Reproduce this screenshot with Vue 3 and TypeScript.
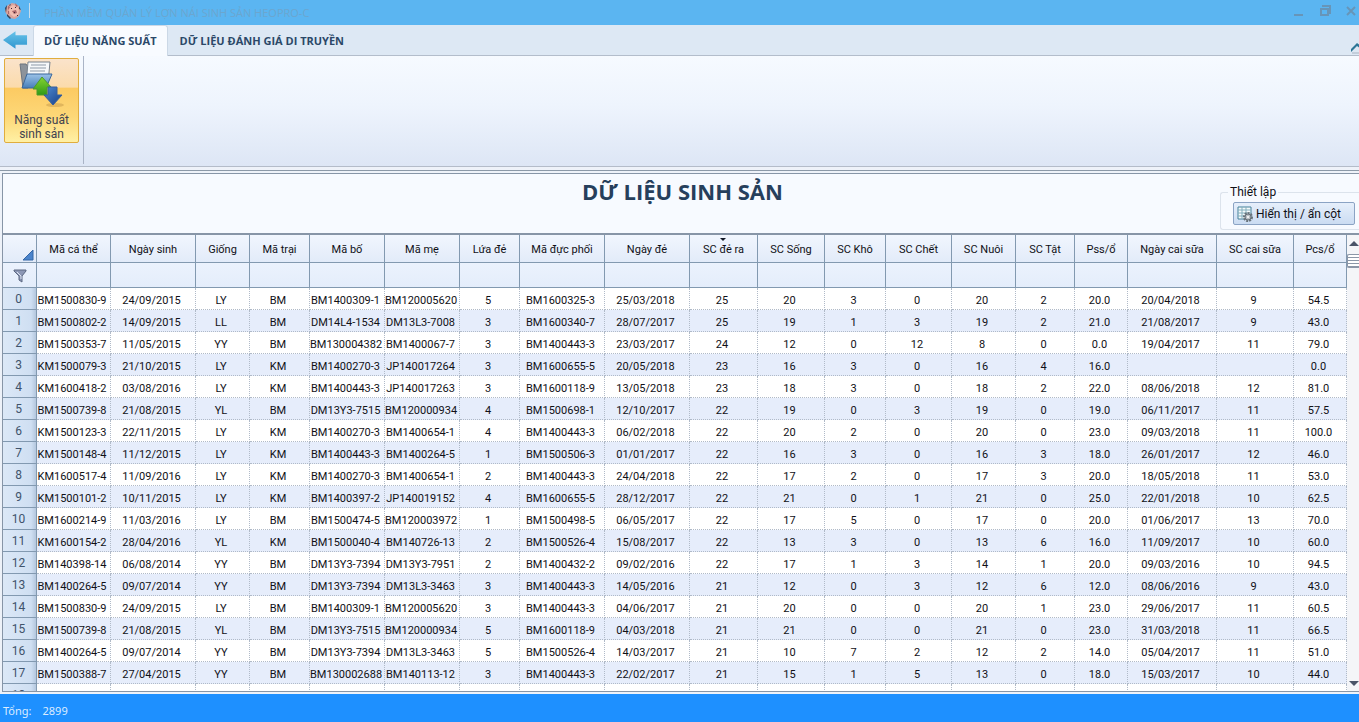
<script setup lang="ts">
interface Column { label: string; width: number }

const columns: Column[] = [
  { label: 'Mã cá thể', width: 74 },
  { label: 'Ngày sinh', width: 85 },
  { label: 'Giống', width: 54 },
  { label: 'Mã trại', width: 60 },
  { label: 'Mã bố', width: 75 },
  { label: 'Mã mẹ', width: 75 },
  { label: 'Lứa đẻ', width: 60 },
  { label: 'Mã đực phối', width: 85 },
  { label: 'Ngày đẻ', width: 85 },
  { label: 'SC đẻ ra', width: 68 },
  { label: 'SC Sống', width: 67 },
  { label: 'SC Khô', width: 61 },
  { label: 'SC Chết', width: 66 },
  { label: 'SC Nuôi', width: 64 },
  { label: 'SC Tật', width: 59 },
  { label: 'Pss/ổ', width: 53 },
  { label: 'Ngày cai sữa', width: 89 },
  { label: 'SC cai sữa', width: 77 },
  { label: 'Pcs/ổ', width: 53 },
]
const sortedLabel = 'SC đẻ ra'

const rows: string[][] = [
  'BM1500830-9,24/09/2015,LY,BM,BM1400309-1,BM120005620,5,BM1600325-3,25/03/2018,25,20,3,0,20,2,20.0,20/04/2018,9,54.5',
  'BM1500802-2,14/09/2015,LL,BM,DM14L4-1534,DM13L3-7008,3,BM1600340-7,28/07/2017,25,19,1,3,19,2,21.0,21/08/2017,9,43.0',
  'BM1500353-7,11/05/2015,YY,BM,BM130004382,BM1400067-7,3,BM1400443-3,23/03/2017,24,12,0,12,8,0,0.0,19/04/2017,11,79.0',
  'KM1500079-3,21/10/2015,LY,KM,BM1400270-3,JP140017264,3,BM1600655-5,20/05/2018,23,16,3,0,16,4,16.0,,,0.0',
  'KM1600418-2,03/08/2016,LY,KM,BM1400443-3,JP140017263,3,BM1600118-9,13/05/2018,23,18,3,0,18,2,22.0,08/06/2018,12,81.0',
  'BM1500739-8,21/08/2015,YL,BM,DM13Y3-7515,BM120000934,4,BM1500698-1,12/10/2017,22,19,0,3,19,0,19.0,06/11/2017,11,57.5',
  'KM1500123-3,22/11/2015,LY,KM,BM1400270-3,BM1400654-1,4,BM1400443-3,06/02/2018,22,20,2,0,20,0,23.0,09/03/2018,11,100.0',
  'KM1500148-4,11/12/2015,LY,KM,BM1400443-3,BM1400264-5,1,BM1500506-3,01/01/2017,22,16,3,0,16,3,18.0,26/01/2017,12,46.0',
  'KM1600517-4,11/09/2016,LY,KM,BM1400270-3,BM1400654-1,2,BM1400443-3,24/04/2018,22,17,2,0,17,3,20.0,18/05/2018,11,53.0',
  'KM1500101-2,10/11/2015,LY,KM,BM1400397-2,JP140019152,4,BM1600655-5,28/12/2017,22,21,0,1,21,0,25.0,22/01/2018,10,62.5',
  'BM1600214-9,11/03/2016,LY,BM,BM1500474-5,BM120003972,1,BM1500498-5,06/05/2017,22,17,5,0,17,0,20.0,01/06/2017,13,70.0',
  'KM1600154-2,28/04/2016,YL,KM,BM1500040-4,BM140726-13,2,BM1500526-4,15/08/2017,22,13,3,0,13,6,16.0,11/09/2017,10,60.0',
  'BM140398-14,06/08/2014,YY,BM,DM13Y3-7394,DM13Y3-7951,2,BM1400432-2,09/02/2016,22,17,1,3,14,1,20.0,09/03/2016,10,94.5',
  'BM1400264-5,09/07/2014,YY,BM,DM13Y3-7394,DM13L3-3463,3,BM1400443-3,14/05/2016,21,12,0,3,12,6,12.0,08/06/2016,9,43.0',
  'BM1500830-9,24/09/2015,LY,BM,BM1400309-1,BM120005620,3,BM1400443-3,04/06/2017,21,20,0,0,20,1,23.0,29/06/2017,11,60.5',
  'BM1500739-8,21/08/2015,YL,BM,DM13Y3-7515,BM120000934,5,BM1600118-9,04/03/2018,21,21,0,0,21,0,23.0,31/03/2018,11,66.5',
  'BM1400264-5,09/07/2014,YY,BM,DM13Y3-7394,DM13L3-3463,5,BM1500526-4,14/03/2017,21,10,7,2,12,2,14.0,05/04/2017,11,51.0',
  'BM1500388-7,27/04/2015,YY,BM,BM130002688,BM140113-12,3,BM1400443-3,22/02/2017,21,15,1,5,13,0,18.0,15/03/2017,10,44.0',
  ',,,,,,,,,,,,,,,,,,',
].map((line) => line.split(','))
</script>

<template>
  <div class="app">
    <header class="titlebar">
      <svg class="logo" viewBox="0 0 18 18" aria-hidden="true">
        <path d="M2 6 4 3l4-2 4 1 3 2 2 5-2 5-4 3-5-1-3-3-2-4z" fill="#d9a29a" />
        <path d="M6 5 9 3l4 1 2 4-1 5-4 2-4-3-1-4z" fill="#efbdb1" />
        <path d="M1 6 3 3 2 11zM3 12l4 4-1 1-3-3zM15 4l2 4-2-1zM5 3l2-1-1 2z" fill="#33435a" />
        <path d="m4 4 2 1-2 3zM11 1l3 3-2 1zM8 9l4-1 1 3-3 1zM4 9h1v3H4z" fill="#a8666a" />
        <path d="M7 6h1v1H7zM11 5h1v1h-1zM10 10h1v1h-1zM13 13h1v1h-1z" fill="#3b2632" />
      </svg>
      <span class="divider"></span>
      <span class="app-name">PHẦN MỀM QUẢN LÝ LỢN NÁI SINH SẢN HEOPRO-C</span>
      <div class="window-buttons">
        <button type="button" aria-label="Thu nhỏ">
          <svg viewBox="0 0 12 12"><path d="M1 10h9" /></svg>
        </button>
        <button type="button" aria-label="Khôi phục">
          <svg viewBox="0 0 12 12"><path d="M3 1h8v8M2 4h7v6H2z" /></svg>
        </button>
        <button type="button" aria-label="Đóng">
          <svg viewBox="0 0 12 12"><path d="m2 2 8 8M10 2l-8 8" /></svg>
        </button>
      </div>
    </header>

    <nav class="tabs">
      <button class="back" type="button" aria-label="Quay lại">
        <svg viewBox="0 0 26 20">
          <defs>
            <linearGradient id="back-fill" x1="0" y1="0" x2="0" y2="1">
              <stop offset="0" stop-color="#67c3e9" />
              <stop offset="1" stop-color="#2f96cf" />
            </linearGradient>
          </defs>
          <path d="M0 10 13 1v4h12v10H13v4z" fill="url(#back-fill)" />
        </svg>
      </button>
      <button class="tab active" type="button">DỮ LIỆU NĂNG SUẤT</button>
      <button class="tab" type="button">DỮ LIỆU ĐÁNH GIÁ DI TRUYỀN</button>
      <button class="collapse" type="button" aria-label="Thu gọn">
        <svg viewBox="0 0 8 14"><path d="M0 8 6 2l8 6v3L6 5 0 11z" fill="#2d7696" /><path d="M1 12h7" stroke="#a9b4c2" /></svg>
      </button>
    </nav>

    <section class="ribbon">
      <div class="ribbon-group">
        <button class="big-button" type="button">
          <svg viewBox="0 0 48 48" aria-hidden="true">
            <defs>
              <linearGradient id="folder" x1="0" y1="0" x2="0" y2="1">
                <stop offset="0" stop-color="#9cc3e8" />
                <stop offset="1" stop-color="#477eb9" />
              </linearGradient>
              <linearGradient id="up" x1="0" y1="0" x2="0" y2="1">
                <stop offset="0" stop-color="#86d332" />
                <stop offset="1" stop-color="#2f9a16" />
              </linearGradient>
              <linearGradient id="down" x1="0" y1="0" x2="1" y2="1">
                <stop offset="0" stop-color="#4f8ad0" />
                <stop offset="1" stop-color="#153f88" />
              </linearGradient>
            </defs>
            <ellipse cx="37" cy="46" rx="9" ry="2" fill="#c69a4a" opacity=".5" />
            <path d="M2 5h6l2 3v21H5z" fill="#8d939b" stroke="#6c7480" />
            <path d="M10 3h22l-2 21-22 2z" fill="#f6f8fa" stroke="#79828d" />
            <path d="M13 6h15M12 9h16M12 12h15" stroke="#8d99a7" />
            <path d="M9 15h25l-6 14H4z" fill="url(#folder)" stroke="#3b679b" />
            <path d="m24 18 9 10h-4v8H19v-6h-4z" fill="url(#up)" stroke="#4c9b2a" />
            <path d="M30 28h9v8h5L35 46l-9-10h4z" fill="url(#down)" stroke="#365f9e" />
          </svg>
          <span>Năng suất<br />sinh sản</span>
        </button>
      </div>
    </section>

    <main class="panel">
      <div class="panel-head">
        <h1>DỮ LIỆU SINH SẢN</h1>
        <fieldset class="settings">
          <legend>Thiết lập</legend>
          <button type="button">
            <svg viewBox="0 0 16 16" aria-hidden="true">
              <path d="M1 1h13v12H1z" fill="#f4fafb" stroke="#44809a" />
              <path d="M1 4h13M1 7h13M1 10h13M5 1v12M9 1v12" stroke="#83afbd" />
              <circle cx="11" cy="11" r="4" fill="none" stroke="#68727a" stroke-width="2" stroke-dasharray="2 1" />
              <circle cx="11" cy="11" r="3" fill="#b9c0c5" stroke="#68727a" />
              <circle cx="11" cy="11" r="1" fill="#fff" />
            </svg>
            Hiển thị / ẩn cột
          </button>
        </fieldset>
      </div>

      <div class="grid">
        <div class="grid-view">
          <table>
            <colgroup>
              <col class="index-col" />
              <col v-for="c in columns" :key="c.label" :style="{ width: c.width + 'px' }" />
            </colgroup>
            <thead>
              <tr class="labels">
                <th class="corner" aria-label="Chọn tất cả">
                  <svg viewBox="0 0 12 12"><path d="M11 1v10H1z" fill="#4b84cc" stroke="#3566a5" /></svg>
                </th>
                <th v-for="c in columns" :key="c.label" scope="col" :class="{ sorted: c.label === sortedLabel }">{{ c.label }}</th>
              </tr>
              <tr class="filters">
                <th aria-label="Lọc">
                  <svg viewBox="0 0 14 14">
                    <path d="M1 1h12v1L9 7v6l-3-2V7L1 2z" fill="#8c97b5" stroke="#5c6882" />
                    <path d="m4 3 4 4v3" fill="none" stroke="#dfe5f2" />
                  </svg>
                </th>
                <td v-for="c in columns" :key="c.label"></td>
              </tr>
            </thead>
            <tbody>
              <tr v-for="(row, i) in rows" :key="i">
                <th scope="row">{{ i }}</th>
                <td v-for="(cell, j) in row" :key="j">{{ cell }}</td>
              </tr>
            </tbody>
          </table>
        </div>
        <div class="scrollbar">
          <button class="up" type="button" aria-label="Cuộn lên"></button>
          <span class="thumb"></span>
          <button class="down" type="button" aria-label="Cuộn xuống"></button>
        </div>
      </div>
    </main>

    <footer class="status"><span>Tổng:</span><span>2899</span></footer>
  </div>
</template>

<style>
body {
  overflow: hidden;
}
</style>

<style scoped>
* {
  box-sizing: border-box;
}

.app {
  display: flex;
  flex-direction: column;
  height: 100vh;
  overflow: hidden;
  background: #eef2f9;
  color: #101016;
  font-family: Roboto, "Noto Sans", sans-serif;
  font-size: 11px;
}

button {
  margin: 0;
  padding: 0;
  border: 0;
  background: none;
  color: inherit;
  font: inherit;
}

svg {
  display: block;
  flex: none;
}

.titlebar {
  display: flex;
  flex: none;
  align-items: center;
  height: 25px;
  padding: 0 2px 4px 4px;
  background: #5bb5f1;
}

.logo {
  width: 18px;
  height: 18px;
}

.divider {
  width: 1px;
  height: 15px;
  margin: 0 14px 0 7px;
  background: #c5dced;
}

.app-name {
  padding-top: 5px;
  color: #6ba6cf;
  font-family: "Open Sans", "Noto Sans", sans-serif;
  font-size: 11px;
  line-height: 16px;
}

.window-buttons {
  display: flex;
  gap: 14px;
  margin-left: auto;
}

.window-buttons svg {
  width: 12px;
  height: 12px;
  fill: none;
  stroke: #6795b8;
  stroke-width: 2;
}

.tabs {
  display: flex;
  flex: none;
  height: 31px;
  border-bottom: 1px solid #b3bdcb;
  background: #dde8f4;
}

.back {
  width: 33px;
  padding: 0 0 1px 3px;
}

.back svg {
  width: 25px;
  height: 20px;
}

.tab {
  height: 31px;
  padding: 0 12px;
  color: #2b4868;
  font-family: "Open Sans", "Noto Sans", sans-serif;
  font-size: 11px;
  font-weight: 700;
}

.tab.active {
  padding: 0 10px 1px;
  border: 1px solid #cbd8e6;
  border-bottom: 0;
  border-radius: 3px 3px 0 0;
  background: #f8fbff;
}

.collapse {
  align-self: flex-end;
  margin-left: auto;
}

.collapse svg {
  width: 8px;
  height: 14px;
}

.ribbon {
  flex: none;
  height: 111px;
  border-bottom: 1px solid #b4bcc9;
  background: linear-gradient(#f6faff, #eef4fd 45%, #dde6f5);
}

.ribbon-group {
  width: 84px;
  height: 108px;
  padding: 2px 4px;
  border-right: 1px solid #aab4c6;
}

.big-button {
  display: flex;
  flex-direction: column;
  align-items: center;
  gap: 6px;
  width: 75px;
  height: 85px;
  border: 1px solid #e0ad3e;
  border-radius: 2px;
  background: linear-gradient(#fae3cb, #fbdbab 34%, #fcca62 35%, #fdd878 70%, #fff0a4);
  color: #3e4250;
  font-size: 12px;
  line-height: 14px;
}

.big-button svg {
  width: 48px;
  height: 48px;
}

.panel {
  display: flex;
  flex: 1;
  flex-direction: column;
  min-height: 0;
  margin-top: 3px;
  padding: 2px 0 0 2px;
  border-top: 1px solid #8c99a8;
}

.panel-head {
  display: flex;
  flex: none;
  align-items: flex-start;
  height: 62px;
  border: solid #8795a7;
  border-width: 1px 0 2px 1px;
  background: #f7faff;
}

h1 {
  flex: 1;
  margin: 0;
  padding: 2px 0 0 142px;
  color: #263f5c;
  font-family: "Open Sans", "Noto Sans", sans-serif;
  font-size: 22px;
  font-weight: 700;
  line-height: 30px;
  text-align: center;
}

.settings {
  width: 139px;
  min-width: 0;
  height: 46px;
  margin: 10px 0 0;
  padding: 0 0 0 12px;
  border: 1px solid #dce3ec;
  border-right: 0;
  border-radius: 3px 0 0 3px;
  font-size: 12px;
}

.settings legend {
  margin-left: -5px;
  padding: 0 2px;
  line-height: 16px;
}

.settings button {
  display: flex;
  align-items: center;
  gap: 3px;
  width: 122px;
  height: 23px;
  margin-top: 2px;
  padding-left: 3px;
  border: 1px solid #8ba3c4;
  border-radius: 2px;
  background: linear-gradient(#e6effb, #cbdcf2);
  white-space: nowrap;
}

.settings svg {
  width: 16px;
  height: 16px;
}

.grid {
  display: flex;
  flex: 1;
  min-height: 0;
  border: solid #8795a7;
  border-width: 0 0 1px 1px;
}

.grid-view {
  flex: 1;
  min-width: 0;
  overflow: hidden;
  background: #fff;
}

table {
  width: 100%;
  border-spacing: 0;
  border-collapse: separate;
  table-layout: fixed;
}

.index-col {
  width: 34px;
}

th,
td {
  height: 22px;
  padding: 2px 0 0;
  border: 0 solid #8299b0;
  border-width: 0 1px 1px 0;
  font-weight: 400;
  line-height: 14px;
  text-align: center;
  white-space: nowrap;
}

.labels th {
  height: 28px;
  background: linear-gradient(#f1f6fe, #e2ebf9);
}

.filters th,
.filters td {
  height: 25px;
  background: linear-gradient(#ebf2fd, #e4edfb);
}

.corner svg {
  width: 12px;
  height: 12px;
  margin: 10px 2px 0 auto;
}

.filters svg {
  width: 14px;
  height: 14px;
  margin: 0 auto;
}

.sorted {
  position: relative;
}

.sorted::before {
  position: absolute;
  top: 3px;
  left: 50%;
  margin-left: -4px;
  border: 3px solid transparent;
  border-top-color: #111827;
  border-bottom: 0;
  content: "";
}

tbody th {
  padding: 0 2px 0 0;
  background: linear-gradient(90deg, #dce8f7, #cfdff2 85%, #b4c7de);
  color: #40536b;
  font-size: 12px;
}

tbody td {
  padding: 4px 3px 0 0;
  border-style: dotted;
  border-color: #b0bac8;
}

tbody tr:nth-child(even) td {
  background: #e6edfb;
}

.scrollbar {
  display: flex;
  flex: none;
  flex-direction: column;
  align-items: flex-end;
  width: 12px;
  padding: 6px 0 5px;
  background: #f4f5f8;
}

.up,
.down {
  border: 5px solid transparent;
}

.up {
  border-top: 0;
  border-bottom-color: #4a5468;
}

.down {
  margin-top: auto;
  border-top-color: #4a5468;
  border-bottom: 0;
}

.thumb {
  width: 12px;
  height: 14px;
  margin-top: 8px;
  border: 1px solid #8c97a8;
  border-right: 0;
  border-radius: 2px 0 0 2px;
  background: repeating-linear-gradient(#fff 0 2px, #8c97a8 2px 3px);
}

.status {
  display: flex;
  flex: none;
  align-items: center;
  gap: 11px;
  height: 28px;
  margin-top: 2px;
  padding: 4px 3px 0;
  background: #1e90ff;
  color: #dcecff;
  font-family: "Noto Sans", sans-serif;
  font-size: 11px;
}
</style>
